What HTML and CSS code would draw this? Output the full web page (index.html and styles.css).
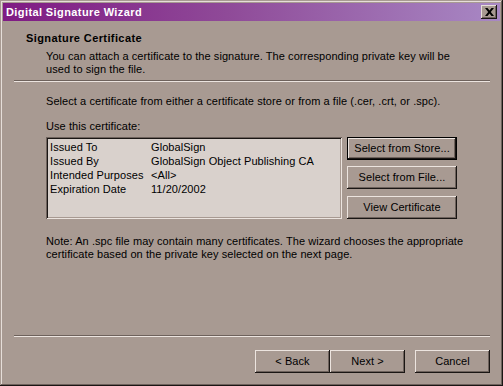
FILE: index.html
```html
<!DOCTYPE html>
<html>
<head>
<meta charset="utf-8">
<link rel="stylesheet" href="styles.css">
</head>
<body>
<div class="window">
  <div class="titlebar">
    <span class="title">Digital Signature Wizard</span>
    <span class="close">
      <svg width="9" height="8" viewBox="0 0 9 8"><path d="M0 0h2.5L4.5 2.5 6.5 0H9L5.8 4 9 8H6.5L4.5 5.5 2.5 8H0l3.2-4z" fill="#000"/></svg>
    </span>
  </div>
  <div class="header">
    <div class="heading">Signature Certificate</div>
    <div class="desc">You can attach a certificate to the signature. The corresponding private key will be used to sign the file.</div>
  </div>
  <div class="sep top-sep"></div>
  <div class="body">
    <p class="line intro">Select a certificate from either a certificate store or from a file (.cer, .crt, or .spc).</p>
    <p class="line label">Use this certificate:</p>
    <div class="cert-row">
      <div class="listbox">
        <div class="row"><span class="k">Issued To</span><span>GlobalSign</span></div>
        <div class="row"><span class="k">Issued By</span><span>GlobalSign Object Publishing CA</span></div>
        <div class="row"><span class="k">Intended Purposes</span><span>&lt;All&gt;</span></div>
        <div class="row"><span class="k">Expiration Date</span><span>11/20/2002</span></div>
      </div>
      <div class="side-buttons">
        <button class="btn default wide">Select from Store...</button>
        <button class="btn wide b2">Select from File...</button>
        <button class="btn wide b3">View Certificate</button>
      </div>
    </div>
    <p class="line note">Note: An .spc file may contain many certificates. The wizard chooses the appropriate certificate based on the private key selected on the next page.</p>
  </div>
  <div class="sep bottom-sep"></div>
  <div class="footer">
    <button class="btn nav">&lt; Back</button>
    <button class="btn nav">Next &gt;</button>
    <button class="btn nav cancel">Cancel</button>
  </div>
</div>
</body>
</html>
```

FILE: styles.css
```css
html, body {
  margin: 0;
  padding: 0;
  background: #a89a92;
}
* { box-sizing: border-box; }

.window {
  width: 503px;
  height: 386px;
  background: #a89a92;
  padding: 3px;
  display: flex;
  flex-direction: column;
  box-shadow: inset -1px -1px #1a1614, inset 1px 1px #a89a92, inset -2px -2px #6e625c, inset 2px 2px #e6ded9;
  font-family: "Liberation Sans", Arial, sans-serif;
  font-size: 11px;
  line-height: 13px;
  letter-spacing: 0.07px;
  color: #000;
}

.titlebar {
  height: 18px;
  flex: none;
  background: linear-gradient(to right, #7f1a83 0%, #8f4a98 45%, #a888c4 100%);
  display: flex;
  align-items: center;
  justify-content: space-between;
  padding: 0 3px 0 3px;
}
.title {
  color: #fff;
  font-weight: bold;
  font-size: 11px;
  letter-spacing: 0.4px;
}
.close {
  width: 16px;
  height: 14px;
  background: #a89a92;
  display: flex;
  align-items: center;
  justify-content: center;
  box-shadow: inset -1px -1px #1a1614, inset 1px 1px #e6ded9, inset -2px -2px #6e625c;
}

.header {
  padding: 11px 0 0 23px;
}
.heading {
  font-weight: bold;
  letter-spacing: 0.4px;
}
.desc {
  margin-top: 5px;
  padding-left: 20px;
  width: 445px;
}

.sep {
  height: 2px;
  flex: none;
  border-top: 1px solid #6e625c;
  border-bottom: 1px solid #ece4df;
  margin-left: 11px;
  margin-right: 10px;
}
.top-sep { margin-top: 4px; }

.body {
  padding-left: 43px;
  flex: 1;
}
.line { margin: 0; }
.intro { margin-top: 13px; }
.label { margin-top: 12px; }

.cert-row {
  display: flex;
  margin-top: 4px;
  gap: 5px;
}
.listbox {
  width: 296px;
  height: 82px;
  background: #d9d1cc;
  padding: 3px 4px;
  box-shadow: inset 1px 1px #6e625c, inset -1px -1px #ece4df, inset 2px 2px #1a1614, inset -2px -2px #a89a92;
}
.row {
  display: flex;
  line-height: 14px;
}
.row .k { width: 101px; }

.side-buttons {
  display: flex;
  flex-direction: column;
}
.btn {
  font-family: "Liberation Sans", Arial, sans-serif;
  font-size: 11px;
  line-height: 13px;
  letter-spacing: 0.07px;
  color: #000;
  background: #a89a92;
  border: none;
  padding: 0;
  height: 23px;
  box-shadow: inset -1px -1px #1a1614, inset 1px 1px #ece4df, inset -2px -2px #6e625c;
}
.btn.default {
  box-shadow: inset 0 0 0 1px #000, inset -2px -2px #1a1614, inset 2px 2px #ece4df, inset -3px -3px #6e625c;
}
.wide { width: 110px; }
.b2 { margin-top: 6px; }
.b3 { margin-top: 7px; }

.note { margin-top: 16px; width: 445px; }

.bottom-sep { margin-top: auto; }

.footer {
  display: flex;
  justify-content: flex-end;
  padding: 13px 10px 10px 0;
}
.nav { width: 75px; }
.cancel { margin-left: 10px; }
```
